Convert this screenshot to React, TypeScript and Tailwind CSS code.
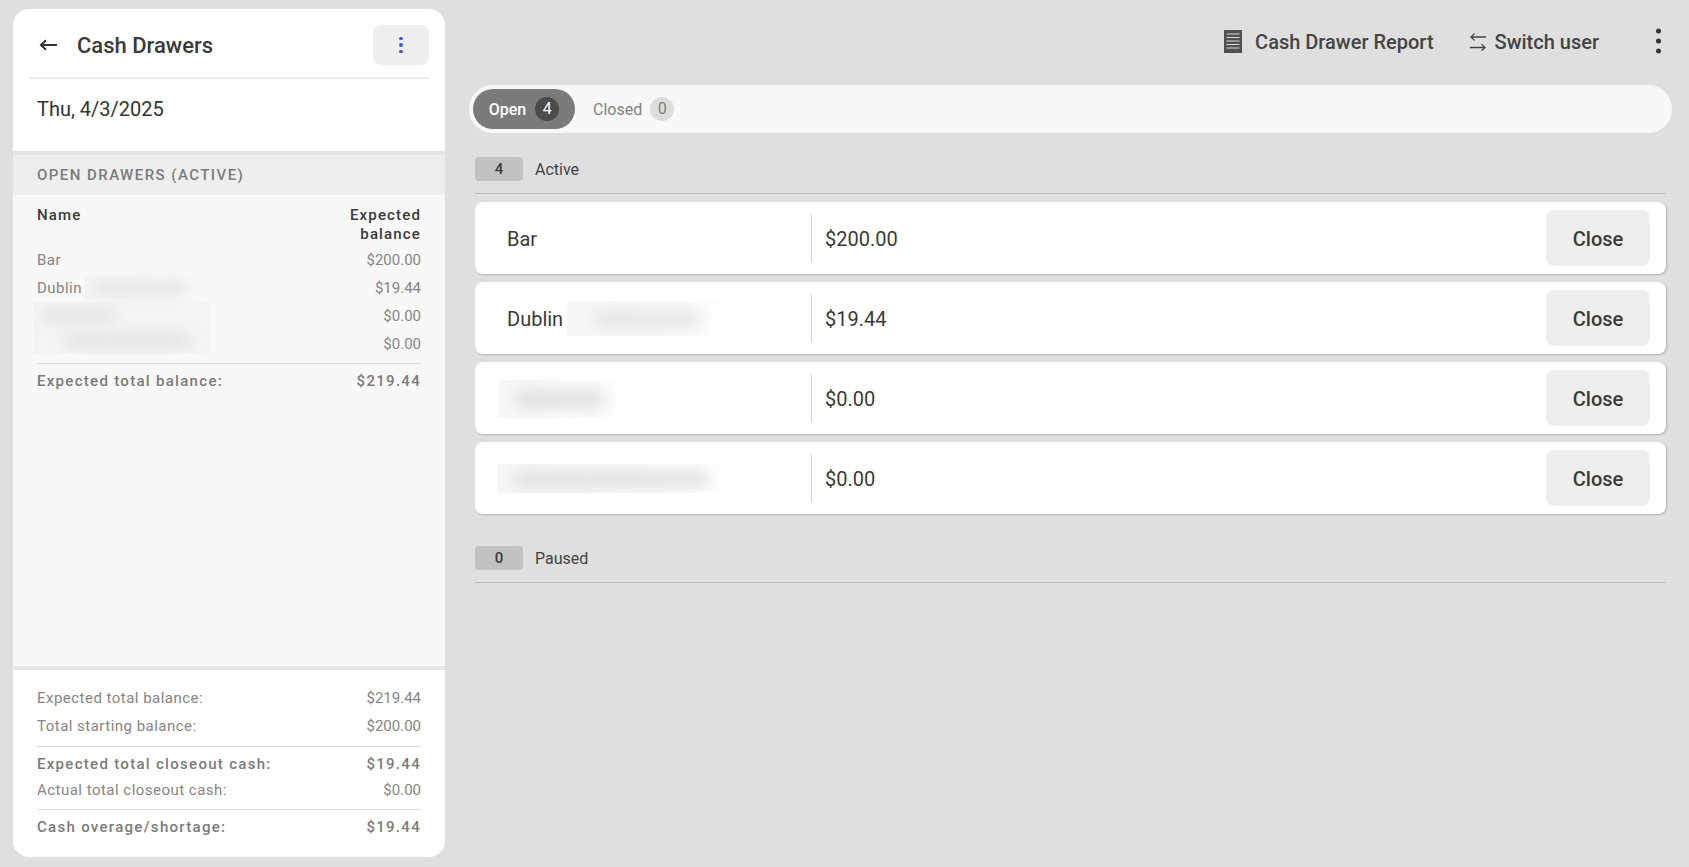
const drawers = [
  { name: "Bar", balance: "$200.00" },
  { name: "Dublin", balance: "$19.44", blur: "dublin" },
  { name: "", balance: "$0.00", blur: "short" },
  { name: "", balance: "$0.00", blur: "long" },
];

function BackIcon() {
  return (
    <svg width="18" height="12" viewBox="0 0 18 12" fill="none" stroke="#333" strokeWidth="2" className="ml-[10px] shrink-0">
      <path d="M18 6H2.5M7 1.2 2 6l5 4.8" />
    </svg>
  );
}

function ReportIcon() {
  return (
    <svg width="18" height="23" viewBox="0 0 18 23" className="shrink-0">
      <rect width="18" height="23" fill="#505050" rx="0.5" />
      <path d="M2.5 4h13M2.5 7.5h13M2.5 11h13M2.5 14.5h13M2.5 18h13" stroke="#d8d8d8" strokeWidth="1.2" />
    </svg>
  );
}

function SwitchIcon() {
  return (
    <svg width="16" height="18" viewBox="0 0 16 18" fill="none" stroke="#444" strokeWidth="1.3" className="shrink-0">
      <path d="M16 4H1M4.6.6 1 4l3.6 3.4" />
      <path d="M0 14.5h15M11.4 11.1l3.6 3.4-3.6 3.4" />
    </svg>
  );
}

function Dots({ size, color, gap }: { size: string; color: string; gap: string }) {
  return (
    <span className={`flex flex-col items-center ${gap}`}>
      <span className={`rounded-full ${size} ${color}`} />
      <span className={`rounded-full ${size} ${color}`} />
      <span className={`rounded-full ${size} ${color}`} />
    </span>
  );
}

function SummaryRow({ label, value, bold }: { label: string; value: string; bold?: boolean }) {
  return (
    <div
      className={
        bold
          ? "flex items-center justify-between font-medium tracking-[1.3px] text-[#7b7b7b]"
          : "flex items-center justify-between text-[#858585]"
      }
    >
      <span className={bold ? "" : "tracking-[0.48px]"}>{label}</span>
      <span>{value}</span>
    </div>
  );
}

function SectionHeader({ count, label }: { count: number; label: string }) {
  return (
    <div className="flex h-[37px] items-start border-b border-[#bfbfbf]">
      <span className="flex h-6 w-12 items-center justify-center rounded bg-[#c2c2c2] pt-px text-[15px] font-medium text-[#3a3a3a]">
        {count}
      </span>
      <span className="ml-3 flex h-6 items-center pt-px text-base text-[#444]">{label}</span>
    </div>
  );
}

function SidebarBlur() {
  return (
    <div className="-ml-[4px] flex h-[52px] w-[178px] flex-col justify-around overflow-hidden bg-[#f4f4f4] px-2">
      <div className="h-4 w-[75px] rounded bg-[#e6e6e6] blur-[7px]" />
      <div className="ml-6 h-4 w-[125px] rounded bg-[#e4e4e4] blur-[7px]" />
    </div>
  );
}

function RowBlur({ kind }: { kind: string }) {
  if (kind === "dublin") {
    return (
      <div className="ml-1 flex h-[35px] w-[190px] items-center overflow-hidden bg-gradient-to-r from-[#f7f7f7] to-white pl-7">
        <div className="h-4 w-[105px] rounded bg-[#e2e2e2] blur-[8px]" />
      </div>
    );
  }
  if (kind === "short") {
    return (
      <div className="-ml-2 flex h-[38px] w-[136px] items-center overflow-hidden bg-gradient-to-r from-[#f7f7f7] to-white pl-4">
        <div className="h-4 w-[90px] rounded bg-[#dcdcdc] blur-[8px]" />
      </div>
    );
  }
  return (
    <div className="-ml-[10px] flex h-[29px] w-[240px] items-center overflow-hidden bg-gradient-to-r from-[#f7f7f7] to-white pl-4">
      <div className="h-4 w-[195px] rounded bg-[#dedede] blur-[8px]" />
    </div>
  );
}

export default function App() {
  return (
    <div
      className="flex h-[867px] w-full overflow-hidden bg-[#dfdfdf] text-[#333]"
      style={{ fontFamily: "Roboto, sans-serif" }}
    >
      <aside className="mt-[9px] mb-[10px] ml-[13px] flex w-[432px] shrink-0 flex-col overflow-hidden rounded-2xl bg-white">
        <div className="mx-4 flex h-[70px] items-center justify-between border-b-2 border-[#eeeeee] pt-1">
          <div className="flex items-center">
            <BackIcon />
            <h1 className="ml-[20px] text-[22px] font-medium text-[#3a3a3a]">Cash Drawers</h1>
          </div>
          <button className="flex h-10 w-14 items-center justify-center rounded-lg bg-[#eeeeee]">
            <Dots size="size-[3.5px]" color="bg-[#3d5fd0]" gap="gap-[3px]" />
          </button>
        </div>
        <div className="flex h-[72px] items-center px-6 pb-3 text-xl text-[#333]">Thu, 4/3/2025</div>
        <div className="flex flex-1 flex-col border-y-4 border-[#e4e4e4] bg-[#f8f8f8]">
          <div className="flex h-10 items-center bg-[#eeeeee] px-6 pt-px text-[15px] font-medium tracking-[1.45px] text-[#7b7b7b]">
            OPEN DRAWERS (ACTIVE)
          </div>
          <div className="mx-6 pt-[11px] text-[15px]">
            <div className="flex justify-between font-medium leading-[19px] tracking-[1.15px] text-[#3a3a3a]">
              <span>Name</span>
              <span className="text-right">
                Expected
                <br />
                balance
              </span>
            </div>
            <div className="mt-[2px] border-b border-[#d8d8d8] pb-[5px] leading-[28px] text-[#858585]">
              <div className="flex justify-between">
                <span className="tracking-[0.48px]">Bar</span>
                <span>$200.00</span>
              </div>
              <div className="flex justify-between">
                <span className="flex items-center tracking-[0.48px]">
                  Dublin
                  <span className="ml-[3px] flex h-[26px] w-[120px] items-center bg-gradient-to-r from-[#f3f3f3] to-[#f8f8f8] pl-3">
                    <span className="h-3 w-[90px] rounded bg-[#e4e4e4] blur-[6px]" />
                  </span>
                </span>
                <span>$19.44</span>
              </div>
              <div className="flex justify-between">
                <SidebarBlur />
                <span>
                  $0.00
                  <br />
                  $0.00
                </span>
              </div>
            </div>
            <div className="pt-[6px]">
              <SummaryRow label="Expected total balance:" value="$219.44" bold />
            </div>
          </div>
        </div>
        <div className="flex h-[187px] flex-col px-6 pt-[14px] text-[15px] leading-[28px]">
          <SummaryRow label="Expected total balance:" value="$219.44" />
          <SummaryRow label="Total starting balance:" value="$200.00" />
          <div className="mt-[6px] border-t border-[#e0e0e0] pt-[3px]">
            <SummaryRow label="Expected total closeout cash:" value="$19.44" bold />
          </div>
          <div className="-mt-[2px] pb-[5px]">
            <SummaryRow label="Actual total closeout cash:" value="$0.00" />
          </div>
          <div className="border-t border-[#e0e0e0] pt-[3px]">
            <SummaryRow label="Cash overage/shortage:" value="$19.44" bold />
          </div>
        </div>
      </aside>

      <main className="flex min-w-0 flex-1 flex-col pl-6 pr-[17px]">
        <header className="flex h-[85px] shrink-0 items-center justify-end pb-[2px]">
          <button className="flex items-center text-xl font-medium text-[#444]">
            <ReportIcon />
            <span className="ml-[13px]">Cash Drawer Report</span>
          </button>
          <button className="ml-9 flex items-center text-xl font-medium text-[#444]">
            <SwitchIcon />
            <span className="ml-[9px]">Switch user</span>
          </button>
          <span className="mr-[11px] ml-[57px] -translate-y-[0.5px]">
            <Dots size="size-[5px]" color="bg-[#333]" gap="gap-[5px]" />
          </span>
        </header>

        <nav className="flex h-12 shrink-0 items-center rounded-full bg-[#f8f8f8] pl-1 text-base">
          <button className="flex h-10 w-[102px] items-center justify-center gap-[9px] rounded-full bg-[#7a7a7a] font-medium text-white">
            <span className="pt-px">Open</span>
            <span className="flex size-6 items-center justify-center rounded-full bg-[#4b4b4b] font-normal">4</span>
          </button>
          <button className="ml-[18px] flex items-center gap-[8px] text-[#808080]">
            <span className="pt-px">Closed</span>
            <span className="flex size-6 items-center justify-center rounded-full bg-[#dddddd]">0</span>
          </button>
        </nav>

        <section className="mt-6 px-[6px]">
          <SectionHeader count={4} label="Active" />
          <div className="mt-2 flex flex-col gap-2">
            {drawers.map((drawer, i) => (
              <div
                key={i}
                className="flex h-[72px] items-center rounded-lg bg-white pr-4 pl-8 text-xl text-[#3a3a3a] shadow-[1px_1px_2px_rgba(0,0,0,0.2)]"
              >
                <div className="flex w-[304px] shrink-0 items-center pt-px">
                  {drawer.name}
                  {drawer.blur && <RowBlur kind={drawer.blur} />}
                </div>
                <div className="flex h-12 flex-1 items-center border-l border-[#d4d4d4] pt-px pl-[13px]">
                  {drawer.balance}
                </div>
                <button className="flex h-14 w-[104px] items-center justify-center rounded-lg bg-[#eeeeee] pt-px font-medium text-[#3a3a3a]">
                  Close
                </button>
              </div>
            ))}
          </div>
          <div className="mt-8">
            <SectionHeader count={0} label="Paused" />
          </div>
        </section>
      </main>
    </div>
  );
}
